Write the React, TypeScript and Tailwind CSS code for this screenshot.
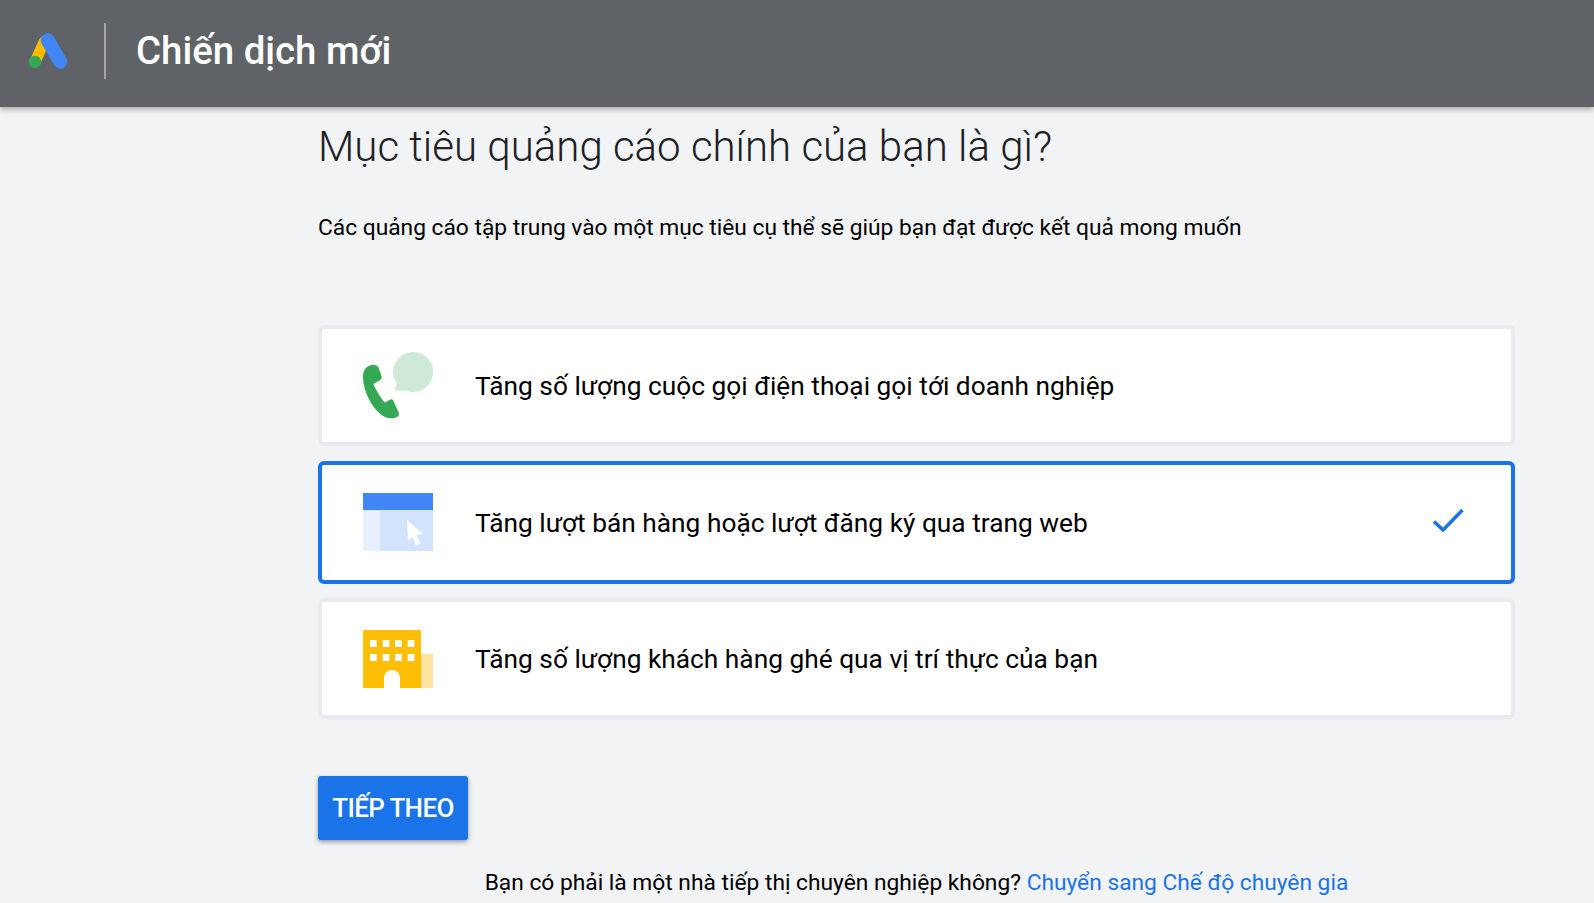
import React, { FC } from "react";

const AdsLogo: FC = () => (
  <svg width="40" height="36" viewBox="0 0 40 36" className="block">
    <path d="M15 9 L6 29" stroke="#fbbc04" strokeWidth="11" strokeLinecap="round" />
    <path d="M18.700 7.300 L31.300 28.700" stroke="#4285f4" strokeWidth="14" strokeLinecap="round" />
    <circle cx="6" cy="29" r="6.200" fill="#34a853" />
  </svg>
);

const PhoneIcon: FC = () => (
  <svg width="70" height="67" viewBox="0 0 70 67" className="block">
    <path d="M50 0a20 20 0 1 1-7.500 38.500 l-10.500 0 1.800-7A20 20 0 0 1 50 0z" fill="#ceead6" />
    <path
      d="M8.500 13C3 14.500 0 18 0 25C0 42 14 66.300 28 66.300C32 66.300 35.500 65 36.300 62L30.500 49C29.500 47 28 46.800 26.500 48L21.500 50.500C17 45 12.500 37 10.300 32L16.500 28.500C18.500 27.300 19 26 18.500 24L15.500 15.500C14 13 11 12.300 8.500 13z"
      fill="#34a853"
    />
  </svg>
);

const WebIcon: FC = () => (
  <svg width="70" height="58" viewBox="0 0 70 58" className="block">
    <rect x="0" y="0" width="70" height="58" fill="#d2e3fc" />
    <rect x="0" y="18" width="17" height="40" fill="#e8f0fe" />
    <rect x="0" y="0" width="70" height="17" fill="#4285f4" />
    <path d="M44 26.500L59.500 41l-6 1 4 8.500-4.500 2-3.500-8.500-4.500 4z" fill="#ffffff" />
  </svg>
);

const BuildingIcon: FC = () => (
  <svg width="70" height="58" viewBox="0 0 70 58" className="block">
    <rect x="58" y="24" width="12" height="34" fill="#fee49f" />
    <rect x="0" y="0" width="58" height="58" fill="#fdbe05" />
    {[7, 19.700, 32, 44.700].map((x) => (
      <React.Fragment key={x}>
        <rect x={x} y="10" width="6.700" height="7" fill="#ffffff" />
        <rect x={x} y="24" width="6.700" height="7" fill="#ffffff" />
      </React.Fragment>
    ))}
    <path d="M21 58V48a8 8 0 0 1 16 0v10z" fill="#ffffff" />
  </svg>
);

const CheckIcon: FC = () => (
  <svg width="32" height="24" viewBox="0 0 32 24" className="block">
    <path d="M2 13.500l9 8.500L30.500 2" fill="none" stroke="#1a73e8" strokeWidth="3.500" />
  </svg>
);

const App: FC = () => {
  return (
    <div className="h-[903px] overflow-hidden bg-[#f1f3f4] font-['Roboto',sans-serif] text-[#202124]">
      {/* header */}
      <div className="relative z-10 flex h-[107px] items-center bg-[#5f6368] pb-[5px] shadow-[0_2px_6px_rgba(60,64,67,0.45)]">
        <div className="ml-[29px] w-[40px]">
          <AdsLogo />
        </div>
        <div className="ml-[35px] h-[56px] w-[2px] bg-[#a3a5a9]" />
        <h1 className="ml-[30px] text-[38.400px] font-medium leading-none text-white">Chiến dịch mới</h1>
      </div>

      <div className="ml-[318px] w-[1197px]">
        <h2 className="mt-[15px] text-[42px] font-light leading-[50px]">Mục tiêu quảng cáo chính của bạn là gì?</h2>
        <p className="mt-[41px] text-[22.750px] leading-[30px] text-black">
          Các quảng cáo tập trung vào một mục tiêu cụ thể sẽ giúp bạn đạt được kết quả mong muốn
        </p>

        <div className="mt-[82px] flex flex-col text-black">
          <div className="flex h-[121px] items-center rounded-[6px] border-[4px] border-[#e8eaed] bg-white pl-[41px]">
            <PhoneIcon />
            <span className="ml-[42px] pt-[2px] text-[26.300px]">Tăng số lượng cuộc gọi điện thoại gọi tới doanh nghiệp</span>
          </div>
          <div className="mt-[15px] flex h-[123px] items-center rounded-[6px] border-[4px] border-[#1a73e8] bg-white pl-[41px] pr-[47px]">
            <div className="mb-[2px]">
              <WebIcon />
            </div>
            <span className="ml-[42px] flex-1 pt-[2px] text-[26.300px]">Tăng lượt bán hàng hoặc lượt đăng ký qua trang web</span>
            <div className="mb-[6px]">
              <CheckIcon />
            </div>
          </div>
          <div className="mt-[14px] flex h-[121px] items-center rounded-[6px] border-[4px] border-[#e8eaed] bg-white pl-[41px]">
            <BuildingIcon />
            <span className="ml-[42px] pt-[2px] text-[26.300px]">Tăng số lượng khách hàng ghé qua vị trí thực của bạn</span>
          </div>
        </div>

        <button className="mt-[57px] flex h-[64px] w-[150px] items-center justify-center rounded-[3px] bg-[#1a73e8] text-[26px] font-medium tracking-tight text-white shadow-[0_2px_4px_rgba(60,64,67,0.5)]">
          TIẾP THEO
        </button>

        <p className="mt-[28px] text-center text-[22.750px] leading-[30px] text-black">
          Bạn có phải là một nhà tiếp thị chuyên nghiệp không?{" "}
          <span className="text-[#1a73e8]">Chuyển sang Chế độ chuyên gia</span>
        </p>
      </div>
    </div>
  );
};

export default App;
